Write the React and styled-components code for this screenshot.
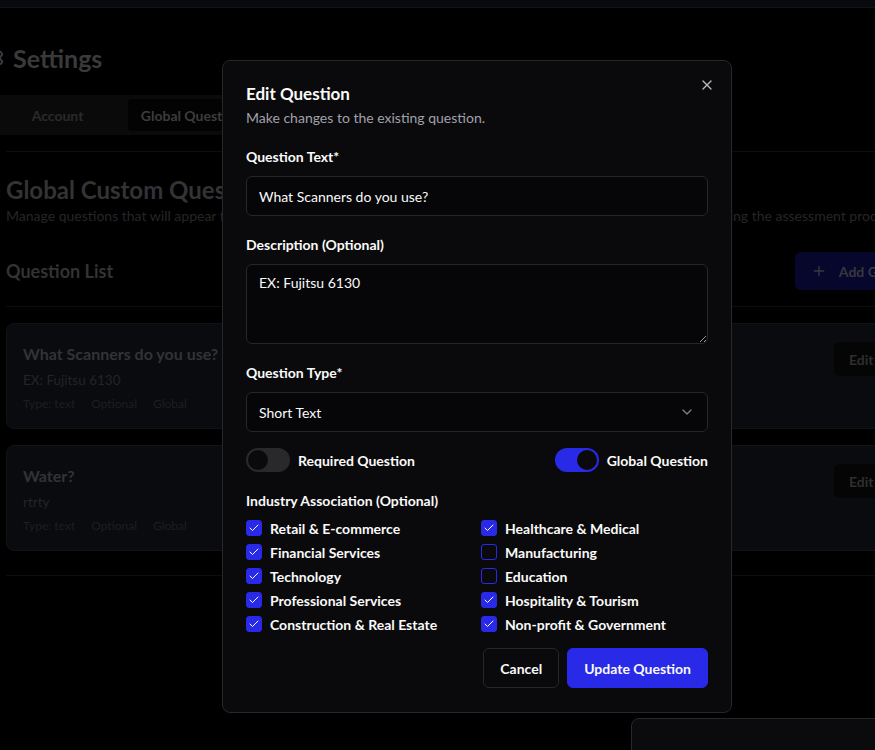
import React, { useState } from "react";
import styled, { createGlobalStyle } from "styled-components";
import { X, Check, ChevronDown, Plus, Settings as Gear } from "lucide-react";

const GlobalStyle = createGlobalStyle`
  * { box-sizing: border-box; }
  html, body {
    margin: 0;
    background: #000;
    overflow: hidden;
    font-family: Lato, "Noto Sans", "Liberation Sans", sans-serif;
    -webkit-font-smoothing: antialiased;
  }
`;

const TopBar = styled.div`
  height: 8px;
  background: #090a0f;
  border-bottom: 1px solid #12131a;
`;

const Main = styled.main`
  width: 985px;
  padding-left: 6px;
`;

const PageHeader = styled.div`
  display: flex;
  align-items: center;
  gap: 8px;
  margin: 34px 0 0 -25px;
  height: 32px;
  color: #3a3a3c;
  font-size: 25px;
  font-weight: 700;
`;

const Tabs = styled.div`
  display: flex;
  align-items: center;
  gap: 4px;
  margin: 21px 0 0 -19px;
  height: 40px;
  padding: 4px;
  width: 420px;
  background: #0a0a0a;
  border-radius: 6px;
`;

const Tab = styled.div`
  width: 133px;
  height: 32px;
  display: flex;
  align-items: center;
  justify-content: center;
  border-radius: 4px;
  font-size: 14px;
  font-weight: 700;
  color: ${(p) => (p.$active ? "#3c3c3e" : "#2a2a2c")};
  background: ${(p) => (p.$active ? "#030303" : "transparent")};
`;

const Divider = styled.hr`
  border: 0;
  height: 1px;
  background: #0d0d0f;
  margin: ${(p) => p.$m || "16px 0 0"};
`;

const SectionTitle = styled.h2`
  margin: 22px 0 0;
  line-height: 32px;
  font-size: 24px;
  font-weight: 700;
  color: #333335;
`;

const SectionText = styled.p`
  margin: 0;
  line-height: 20px;
  font-size: 14px;
  color: #262628;
  white-space: nowrap;
`;

const ListHeader = styled.div`
  display: flex;
  align-items: center;
  justify-content: space-between;
  margin-top: 26px;
  height: 38px;
`;

const ListTitle = styled.h3`
  margin: 0;
  font-size: 18px;
  font-weight: 700;
  color: #333335;
`;

const AddButton = styled.div`
  display: flex;
  align-items: center;
  gap: 12px;
  height: 38px;
  padding: 0 16px;
  border-radius: 6px;
  background: #07072e;
  color: #38383c;
  font-size: 14px;
  font-weight: 700;
`;

const CardList = styled.div`
  display: flex;
  flex-direction: column;
  gap: 16px;
  margin-top: 16px;
`;

const Card = styled.div`
  display: flex;
  justify-content: space-between;
  align-items: flex-start;
  height: 106px;
  padding: 18px 16px 16px;
  border: 1px solid #121317;
  border-radius: 8px;
  background: #0a0b0e;
`;

const CardTitle = styled.div`
  margin-top: 2px;
  line-height: 20px;
  font-size: 16px;
  font-weight: 700;
  color: #333335;
`;

const CardDesc = styled.div`
  margin-top: 6px;
  line-height: 20px;
  font-size: 13.5px;
  color: #242426;
`;

const Meta = styled.div`
  display: flex;
  gap: 16px;
  margin-top: 6px;
  line-height: 16px;
  font-size: 12px;
  color: #1e1e20;
`;

const Actions = styled.div`
  display: flex;
  gap: 8px;
`;

const GhostButton = styled.div`
  height: 34px;
  padding: 0 15px;
  display: flex;
  align-items: center;
  border-radius: 6px;
  background: #050506;
  color: #2e2e30;
  font-size: 14px;
  font-weight: 700;
`;

const Dialog = styled.div`
  position: fixed;
  left: 222px;
  top: 60px;
  width: 510px;
  padding: 23px 23px 24px;
  background: #0a0a0c;
  border: 1px solid #27272a;
  border-radius: 8px;
  color: #fafafa;
`;

const CloseButton = styled.div`
  position: absolute;
  top: 16px;
  right: 16px;
  color: #b4b4b8;
  display: flex;
`;

const DialogTitle = styled.h2`
  margin: 0;
  line-height: 20px;
  font-size: 17px;
  font-weight: 700;
`;

const DialogDesc = styled.p`
  margin: 4px 0 0;
  line-height: 20px;
  font-size: 14px;
  color: #a1a1aa;
`;

const Form = styled.div`
  display: flex;
  flex-direction: column;
  gap: 19px;
  margin-top: 19px;
`;

const Field = styled.div`
  display: flex;
  flex-direction: column;
  gap: 9px;
`;

const Label = styled.label`
  line-height: 20px;
  font-size: 14px;
  font-weight: 700;
  color: #fafafa;
`;

const inputBase = `
  width: 100%;
  border: 1px solid #27272a;
  border-radius: 6px;
  background: #060608;
  color: #fafafa;
  font-family: inherit;
  font-size: 14px;
  padding: 0 12px;
  outline: none;
`;

const TextInput = styled.input`
  ${inputBase}
  height: 40px;
`;

const TextArea = styled.textarea`
  ${inputBase}
  height: 80px;
  padding-top: 8px;
  line-height: 20px;
  resize: vertical;
  color-scheme: dark;
`;

const Select = styled.div`
  ${inputBase}
  height: 40px;
  display: flex;
  align-items: center;
  justify-content: space-between;
  svg { opacity: 0.5; }
`;

const SwitchRow = styled.div`
  display: flex;
  justify-content: space-between;
  align-items: center;
  margin-top: -3px;
`;

const SwitchItem = styled.div`
  display: flex;
  align-items: center;
  gap: 8px;
  font-size: 14px;
  font-weight: 700;
`;

const Track = styled.div`
  width: 44px;
  height: 24px;
  border-radius: 12px;
  border: 2px solid transparent;
  background: ${(p) => (p.$on ? "#2929e8" : "#29292c")};
  display: flex;
  justify-content: ${(p) => (p.$on ? "flex-end" : "flex-start")};
  align-items: center;
`;

const Thumb = styled.div`
  width: 20px;
  height: 20px;
  border-radius: 50%;
  background: #0a0a0c;
`;

const Industry = styled.div`
  display: flex;
  flex-direction: column;
  gap: 7px;
`;

const CheckGrid = styled.div`
  display: grid;
  grid-template-columns: 1fr 1fr;
  column-gap: 8px;
  row-gap: 4px;
`;

const CheckItem = styled.div`
  display: flex;
  align-items: center;
  gap: 8px;
  height: 20px;
  font-size: 14px;
  font-weight: 700;
`;

const Box = styled.div`
  width: 16px;
  height: 16px;
  border-radius: 3px;
  border: 1px solid #2929e8;
  background: ${(p) => (p.$on ? "#2929e8" : "transparent")};
  display: flex;
  align-items: center;
  justify-content: center;
  color: #fff;
`;

const Footer = styled.div`
  display: flex;
  justify-content: flex-end;
  gap: 8px;
  margin-top: -5px;
`;

const Button = styled.button`
  height: 40px;
  padding: 0 16px;
  border-radius: 6px;
  font-family: inherit;
  font-size: 14px;
  font-weight: 700;
  color: #fafafa;
  border: 1px solid ${(p) => (p.$primary ? "#2929e8" : "#27272a")};
  background: ${(p) => (p.$primary ? "#2929e8" : "#0a0a0c")};
`;

const Toast = styled.div`
  position: fixed;
  left: 631px;
  top: 718px;
  width: 360px;
  height: 64px;
  border: 1px solid #28282c;
  border-radius: 8px;
  background: #0b0b0e;
`;

const industries = [
  ["Retail & E-commerce", true],
  ["Healthcare & Medical", true],
  ["Financial Services", true],
  ["Manufacturing", false],
  ["Technology", true],
  ["Education", false],
  ["Professional Services", true],
  ["Hospitality & Tourism", true],
  ["Construction & Real Estate", true],
  ["Non-profit & Government", true],
];

const questions = [
  { title: "What Scanners do you use?", desc: "EX: Fujitsu 6130" },
  { title: "Water?", desc: "rtrty" },
];

export default function App() {
  const [checks, setChecks] = useState(industries.map((i) => i[1]));
  const [required, setRequired] = useState(false);
  const [global, setGlobal] = useState(true);

  return (
    <>
      <GlobalStyle />
      <TopBar />
      <Main>
        <PageHeader>
          <Gear size={24} strokeWidth={2} />
          Settings
        </PageHeader>
        <Tabs>
          <Tab>Account</Tab>
          <Tab $active>Global Questions</Tab>
          <Tab>Industries</Tab>
        </Tabs>
        <Divider />
        <SectionTitle>Global Custom Questions</SectionTitle>
        <SectionText>
          Manage questions that will appear for every client in every industry. These
          questions are always asked of all clients during the assessment process.
        </SectionText>
        <ListHeader>
          <ListTitle>Question List</ListTitle>
          <AddButton>
            <Plus size={16} />
            Add Global Question
          </AddButton>
        </ListHeader>
        <Divider />
        <CardList>
          {questions.map((q) => (
            <Card key={q.title}>
              <div>
                <CardTitle>{q.title}</CardTitle>
                <CardDesc>{q.desc}</CardDesc>
                <Meta>
                  <span>Type: text</span>
                  <span>Optional</span>
                  <span>Global</span>
                </Meta>
              </div>
              <Actions>
                <GhostButton>Edit</GhostButton>
                <GhostButton>Delete</GhostButton>
              </Actions>
            </Card>
          ))}
        </CardList>
        <Divider $m="24px 0 0" />
      </Main>

      <Dialog>
        <CloseButton>
          <X size={16} />
        </CloseButton>
        <DialogTitle>Edit Question</DialogTitle>
        <DialogDesc>Make changes to the existing question.</DialogDesc>
        <Form>
          <Field>
            <Label>Question Text*</Label>
            <TextInput defaultValue="What Scanners do you use?" />
          </Field>
          <Field>
            <Label>Description (Optional)</Label>
            <TextArea defaultValue="EX: Fujitsu 6130" />
          </Field>
          <Field>
            <Label>Question Type*</Label>
            <Select>
              Short Text
              <ChevronDown size={16} />
            </Select>
          </Field>
          <SwitchRow>
            <SwitchItem onClick={() => setRequired(!required)}>
              <Track $on={required}>
                <Thumb />
              </Track>
              Required Question
            </SwitchItem>
            <SwitchItem onClick={() => setGlobal(!global)}>
              <Track $on={global}>
                <Thumb />
              </Track>
              Global Question
            </SwitchItem>
          </SwitchRow>
          <Industry>
            <Label>Industry Association (Optional)</Label>
            <CheckGrid>
              {industries.map(([name], i) => (
                <CheckItem
                  key={name}
                  onClick={() =>
                    setChecks(checks.map((c, j) => (j === i ? !c : c)))
                  }
                >
                  <Box $on={checks[i]}>
                    {checks[i] && <Check size={12} strokeWidth={2} />}
                  </Box>
                  {name}
                </CheckItem>
              ))}
            </CheckGrid>
          </Industry>
          <Footer>
            <Button>Cancel</Button>
            <Button $primary>Update Question</Button>
          </Footer>
        </Form>
      </Dialog>
      <Toast />
    </>
  );
}
